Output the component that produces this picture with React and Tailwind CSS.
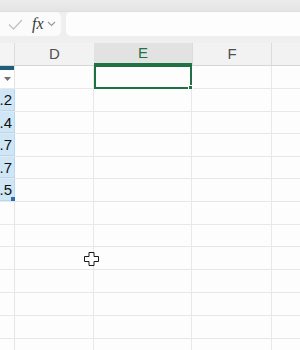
import React from "react";

const rows = [
  { h: "h-[23px]", c: "head" },
  { h: "h-[23px]", c: ".2" },
  { h: "h-[22px]", c: ".4" },
  { h: "h-[23px]", c: ".7" },
  { h: "h-[22px]", c: ".7" },
  { h: "h-[23px]", c: ".5", last: true },
  { h: "h-[23px]" },
  { h: "h-[22px]" },
  { h: "h-[23px]" },
  { h: "h-[23px]" },
  { h: "h-[23px]" },
  { h: "h-[23px]" },
  { h: "h-[23px]" },
];

function CellC({ row }) {
  if (row.c === "head") {
    return (
      <div className="w-[15px] h-full flex flex-col bg-white border-r border-[#e3e3e3]">
        <div className="h-[4px] bg-[#1f5d7c]" />
        <div className="flex-1 flex items-center justify-center">
          <svg width="7" height="4" viewBox="0 0 7 4">
            <path d="M0 0h7L3.5 4z" fill="#707070" />
          </svg>
        </div>
      </div>
    );
  }
  if (row.c) {
    return (
      <div className="relative w-[15px] h-full flex items-center justify-end pr-[2px] bg-[#cfe6f7] border-r border-b border-[#b9d8ef] text-[15px] text-[#111] leading-none">
        {row.c}
        {row.last && <div className="absolute right-[-1px] bottom-[-1px] w-[4px] h-[4px] bg-[#2a6fb5]" />}
      </div>
    );
  }
  return <div className="w-[15px] h-full border-r border-[#e6e6e6]" />;
}

export default function App() {
  return (
    <div className="relative w-[300px] h-[350px] overflow-hidden bg-[#fdfdfd] font-['Liberation_Sans',Arial,sans-serif]">
      {/* ribbon edge */}
      <div className="h-[12px] bg-gradient-to-b from-[#ececec] to-[#e4e4e4] border-b border-[#dedede]" />

      {/* formula bar */}
      <div className="h-[24px] flex bg-[#efefef]">
        <div className="w-[61px] h-full flex items-center bg-[#fbfbfb] rounded-r-[5px] pl-[8px]">
          <svg width="15" height="11" viewBox="0 0 15 11" fill="none">
            <path d="M1 5.5l4.5 4.5L14 1" stroke="#c2c2c2" strokeWidth="1.3" />
          </svg>
          <span className="ml-[9px] font-['Liberation_Serif',serif] italic text-[16px] text-[#3a3a3a] leading-none">
            fx
          </span>
          <svg className="ml-[3px]" width="9" height="6" viewBox="0 0 9 6" fill="none">
            <path d="M1 1l3.5 3.5L8 1" stroke="#9a9a9a" strokeWidth="1.2" />
          </svg>
        </div>
        <div className="ml-[5px] flex-1 h-full bg-[#fdfdfd] rounded-l-[5px]" />
      </div>

      <div className="h-[7px] bg-[#efefef]" />

      {/* column headers */}
      <div className="h-[23px] flex bg-[#f2f2f2] border-b border-[#d6d6d6] text-[15px] text-[#505050]">
        <div className="w-[15px] h-full bg-[#f4f4f4] border-r border-[#dcdcdc]" />
        <div className="w-[79px] h-full flex items-center justify-center">D</div>
        <div className="w-[98px] h-full flex items-center justify-center bg-[#e2e2e2] text-[#217346] border-b-2 border-[#217346]">
          E
        </div>
        <div className="w-[80px] h-full flex items-center justify-center border-l border-r border-[#dcdcdc]">F</div>
        <div className="flex-1 h-full" />
      </div>

      {/* grid */}
      <div className="flex flex-col">
        {rows.map((row, i) => (
          <div key={i} className={`${row.h} flex border-b border-[#e8e8e8]`}>
            <CellC row={row} />
            <div className="w-[79px] h-full border-r border-[#e8e8e8]" />
            <div className="relative w-[98px] h-full border-r border-[#e8e8e8]">
              {i === 0 && (
                <div className="absolute left-0 top-[-1px] right-[-1px] bottom-[-1px] border-2 border-[#1f7145]">
                  <div className="absolute right-[-3px] bottom-[-3px] w-[5px] h-[5px] bg-[#1f7145] border border-white" />
                </div>
              )}
            </div>
            <div className="w-[80px] h-full border-r border-[#e8e8e8]" />
            <div className="flex-1 h-full" />
          </div>
        ))}
      </div>

      {/* mouse cursor */}
      <svg className="absolute left-[84px] top-[252px]" width="15" height="14" viewBox="0 0 15 14">
        <path
          d="M5 0.5h5v4h4.5v5H10v4H5v-4H0.5v-5H5z"
          fill="#ffffff"
          stroke="#1a1a1a"
          strokeWidth="1"
        />
      </svg>
    </div>
  );
}
